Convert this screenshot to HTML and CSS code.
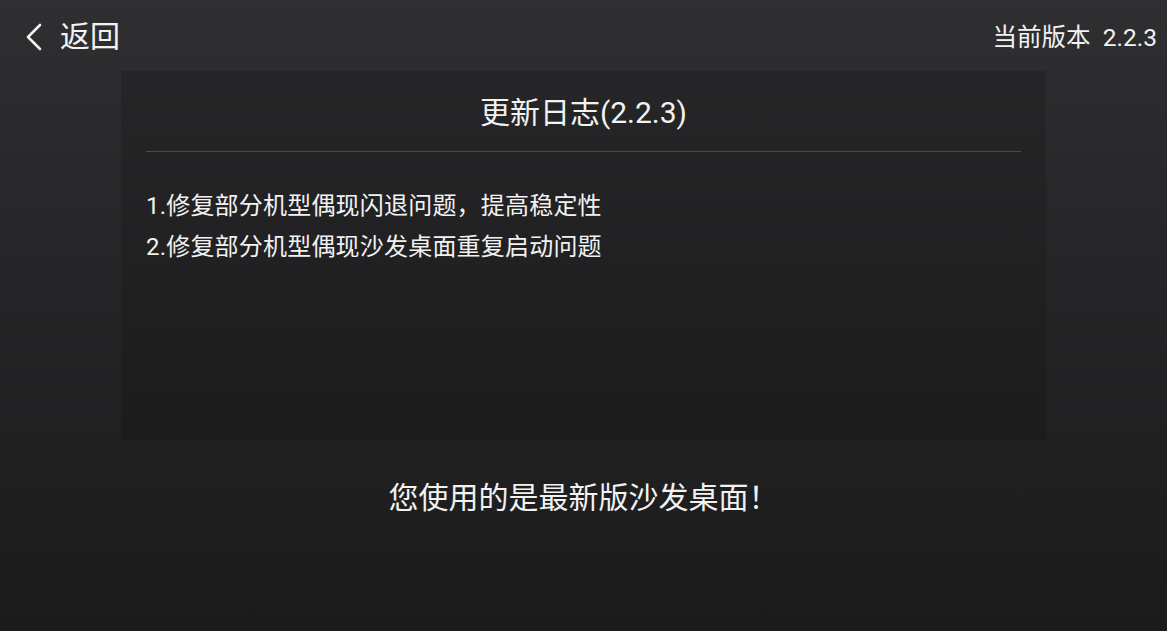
FILE: index.html
```html
<!DOCTYPE html>
<html lang="zh-CN">

<head>
    <meta charset="UTF-8">
    <meta name="viewport" content="width=device-width, initial-scale=1.0">
    <title>更新日志</title>
    <link rel="stylesheet" href="styles.css">
</head>

<body>
    <!-- Top Bar -->
    <div class="top-bar">
        <a href="#" class="back-btn">
            <svg class="back-icon" width="20" height="30" viewBox="0 0 20 30">
                <path d="M16 3 L4 15 L16 27" fill="none" stroke="#f2f2f2" stroke-width="2.6" stroke-linecap="round" stroke-linejoin="round" />
            </svg>
            <span>返回</span>
        </a>
        <div class="version">当前版本&nbsp; 2.2.3</div>
    </div>

    <!-- Changelog -->
    <div class="log-panel">
        <h2 class="log-title">更新日志(2.2.3)</h2>
        <ul class="log-list">
            <li>1.修复部分机型偶现闪退问题，提高稳定性</li>
            <li>2.修复部分机型偶现沙发桌面重复启动问题</li>
        </ul>
    </div>

    <p class="status">您使用的是最新版沙发桌面！</p>
</body>

</html>
```

FILE: styles.css
```css
body {
    font-family: Roboto, "Noto Sans CJK SC", sans-serif;
    background: linear-gradient(180deg, #2f2f31 0%, #252527 45%, #1b1b1c 100%);
    color: #f2f2f2;
    margin: 0;
    padding: 0;
    height: 631px;
    overflow: hidden;
}

/* Top Bar */
.top-bar {
    display: flex;
    justify-content: space-between;
    align-items: center;
    height: 71px;
    padding: 0 10px 0 24px;
}

.back-btn {
    display: flex;
    align-items: center;
    gap: 16px;
    color: #f2f2f2;
    text-decoration: none;
    font-size: 30px;
    line-height: 36px;
    margin-top: 2px;
}

.version {
    font-size: 24.5px;
    line-height: 30px;
    margin-top: 4px;
}

/* Changelog panel */
.log-panel {
    width: 925px;
    height: 369px;
    margin: 0 auto 0 121px;
    background: linear-gradient(180deg, #262628 0%, #1c1c1d 100%);
    padding: 0 25px;
    box-sizing: border-box;
}

.log-title {
    font-size: 30px;
    line-height: 40px;
    font-weight: normal;
    text-align: center;
    margin: 0;
    padding: 22px 0 18px;
    border-bottom: 1px solid #4a4a4b;
}

.log-list {
    list-style: none;
    margin: 0;
    padding: 34px 0 0;
    font-size: 24px;
    letter-spacing: 0.2px;
}

.log-list li {
    line-height: 41px;
}

.status {
    text-align: center;
    font-size: 30px;
    line-height: 40px;
    margin: 38px 0 0;
}
```
